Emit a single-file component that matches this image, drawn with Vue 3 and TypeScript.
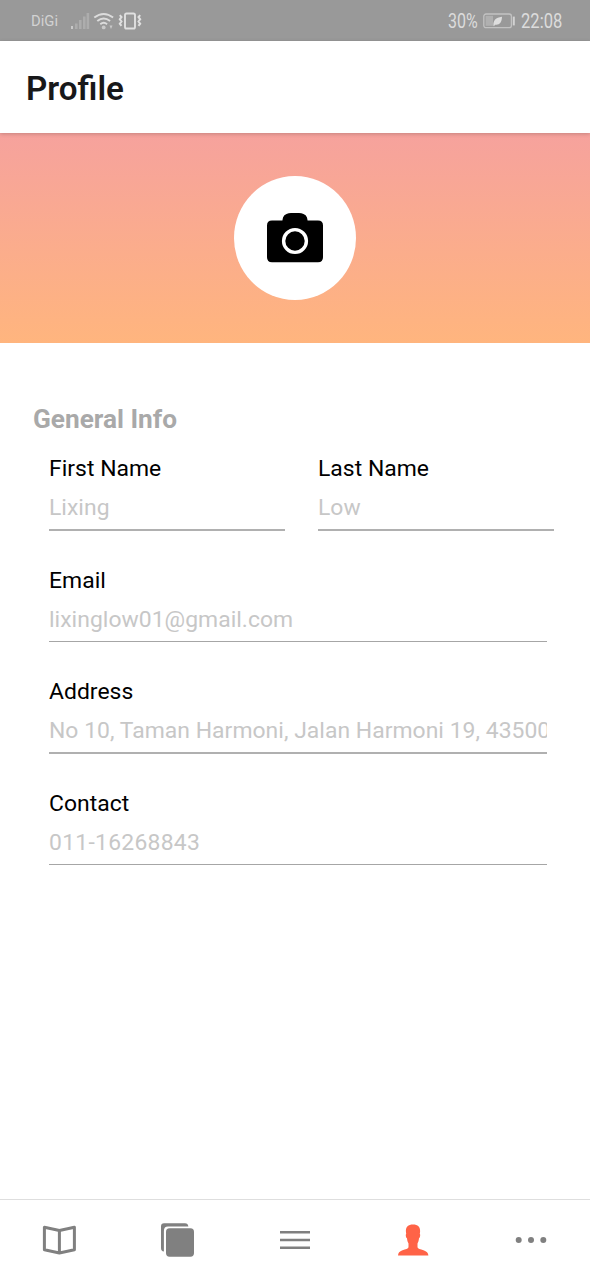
<script setup lang="ts">
interface Field {
  label: string
  value: string
  kind: string
}

const names: Field[] = [
  { label: 'First Name', value: 'Lixing', kind: 'name' },
  { label: 'Last Name', value: 'Low', kind: 'name' },
]

const details: Field[] = [
  { label: 'Email', value: 'lixinglow01@gmail.com', kind: 'email' },
  { label: 'Address', value: 'No 10, Taman Harmoni, Jalan Harmoni 19, 43500', kind: 'address' },
  { label: 'Contact', value: '011-16268843', kind: 'contact' },
]
</script>

<template>
  <div class="screen">
    <div class="status">
      <span class="carrier">DiGi</span>
      <svg class="signals" width="72" height="20" viewBox="0 0 72 20">
        <g fill="#c9c9c9">
          <rect x="1" y="15" width="2" height="3" />
          <g opacity=".42">
            <rect x="5" y="12.5" width="2.6" height="5.5" />
            <rect x="9" y="9" width="2.6" height="9" />
            <rect x="13" y="5.5" width="2.6" height="12.5" />
            <rect x="16.6" y="2" width="2.6" height="16" />
          </g>
          <circle cx="33.7" cy="16.4" r="1.9" />
          <path d="M39.5 14.5h3l-1.5 3.5z" />
        </g>
        <g fill="none" stroke="#dcdcdc" stroke-width="1.9">
          <path d="M24.3 6.6Q33.7 -.8 43.1 6.6" />
          <path d="M27.3 10Q33.7 4.8 40.1 10" />
          <path d="M30.3 13.2Q33.7 10.5 37.1 13.2" />
        </g>
        <g fill="none" stroke="#e0e0e0">
          <rect x="55" y="2.5" width="10" height="15" rx="1.6" stroke-width="1.9" />
          <path d="M49.8 4.2l1.7 1.9-1.7 2.2 1.7 2.2-1.7 2.2 1.7 2.2M70.2 4.2l-1.7 1.9 1.7 2.2-1.7 2.2 1.7 2.2-1.7 2.2" stroke-width="2" />
        </g>
      </svg>
      <span class="percent">30%</span>
      <svg class="battery" width="33" height="16" viewBox="0 0 33 16">
        <rect x=".8" y="1" width="27.6" height="13.6" rx="2.2" fill="none" stroke="#c2c2c2" stroke-width="1.3" />
        <rect x="2.6" y="2.8" width="7.4" height="10" fill="#b0b0b0" />
        <path d="M10.4 12.8C10.2 7.4 12.5 4.7 19 3.8C18.8 9.5 16.5 12.4 12 11.7L11 13.2Z" fill="#dedede" />
        <rect x="29.8" y="3.6" width="2" height="8.8" fill="#d2d2d2" />
      </svg>
      <span class="clock">22:08</span>
    </div>

    <header class="header">
      <h1>Profile</h1>
    </header>

    <div class="hero">
      <div class="avatar">
        <svg width="56" height="50" viewBox="0 0 56 50">
          <path d="M5 7.5H15.4L16 4.5Q17 1.8 19.5 1.1Q21.5 0 24 0H32Q34.5 0 36.5 1.1Q39 1.8 40 4.5L40.6 7.5H51Q56 7.5 56 12.5V44.3Q56 49.3 51 49.3H5Q0 49.3 0 44.3V12.5Q0 7.5 5 7.5Z" />
          <circle cx="28" cy="28" r="11.4" fill="none" stroke="#fff" stroke-width="3.4" />
        </svg>
      </div>
    </div>

    <main class="form">
      <h2>General Info</h2>
      <div class="names">
        <div v-for="f in names" :key="f.label" class="field">
          <div class="label">{{ f.label }}</div>
          <div class="value" :class="f.kind">{{ f.value }}</div>
        </div>
      </div>
      <div class="details">
        <div v-for="f in details" :key="f.label" class="field">
          <div class="label">{{ f.label }}</div>
          <div class="value" :class="f.kind">{{ f.value }}</div>
        </div>
      </div>
    </main>

    <nav class="tabs">
      <div class="tab">
        <svg width="36" height="36" viewBox="0 0 36 36" fill="none" stroke="#808080" stroke-width="3" stroke-linejoin="round">
          <path d="M3.4 5.3L18.4 8.5L33.4 5.3V27.8L18.4 31L3.4 27.8ZM18.4 8.5V31" />
        </svg>
      </div>
      <div class="tab">
        <svg width="36" height="36" viewBox="0 0 36 36" fill="#808080">
          <path d="M5 1.2H26Q29 1.2 29.4 4.6H9Q4.9 4.6 4.9 9V29.6Q2 29.2 2 26V4.2Q2 1.2 5 1.2Z" />
          <rect x="7" y="6.3" width="28" height="28.4" rx="3.6" />
        </svg>
      </div>
      <div class="tab">
        <svg width="36" height="36" viewBox="0 0 36 36" fill="#808080">
          <path d="M3 9.1H33V11.5H3ZM3 16.8H33V19.2H3ZM3 24.5H33V26.9H3Z" />
        </svg>
      </div>
      <div class="tab">
        <svg width="36" height="36" viewBox="0 0 36 36" fill="#ff6347">
          <path d="M18 2.4C13.2 2.4 10.6 4.8 10.9 9.4L11.2 12C10.4 12.4 10.9 15.7 12 16.2C12.2 18.8 12.9 20.3 13.5 21.6V25.3C13.2 27 10.6 27.2 7.5 28.2C4.3 29.3 3.2 30.8 3 33.4H33.4C33.2 30.8 31.7 29.3 28.5 28.2C25.4 27.2 22.8 27 22.5 25.3V21.6C23.1 20.3 23.8 18.8 24 16.2C25.1 15.7 25.6 12.4 24.8 12L25.1 9.4C25.4 4.8 22.8 2.4 18 2.4Z" />
        </svg>
      </div>
      <div class="tab">
        <svg width="36" height="36" viewBox="0 0 36 36" fill="#808080">
          <circle cx="5.7" cy="18" r="3" />
          <circle cx="18" cy="18" r="3" />
          <circle cx="30.3" cy="18" r="3" />
        </svg>
      </div>
    </nav>
  </div>
</template>

<style>
body {
  margin: 0;
  background: #fff;
}
</style>

<style scoped>
.screen {
  width: 590px;
  height: 1280px;
  display: flex;
  flex-direction: column;
  overflow: hidden;
  background: #fff;
  font-family: Roboto, "Liberation Sans", sans-serif;
}

.status {
  height: 41px;
  flex: none;
  box-sizing: border-box;
  padding-left: 31px;
  display: flex;
  align-items: center;
  background: #999;
  color: #dcdcdc;
  white-space: nowrap;
}

.carrier {
  width: 39px;
  font-size: 14.8px;
  line-height: 20px;
  color: #d2d2d2;
  padding-top: 1px;
  box-sizing: border-box;
}

.signals {
  flex: none;
}

.percent {
  width: 35px;
  margin-left: 306px;
  padding-top: 1px;
  font-size: 19.5px;
  transform: scaleX(.82);
  transform-origin: left;
}

.battery {
  flex: none;
}

.clock {
  margin-left: 5px;
  padding-top: 1px;
  font-size: 19.5px;
  transform: scaleX(.85);
  transform-origin: left;
}

.header {
  height: 92px;
  flex: none;
  display: flex;
  align-items: center;
  padding: 4px 26px 0;
  box-sizing: border-box;
  position: relative;
  background: #fff;
  box-shadow: 0 1px 4px rgba(0, 0, 0, .2);
}

h1 {
  margin: 0;
  font-size: 33.2px;
  line-height: 40px;
  font-weight: 600;
  color: #18181a;
}

.hero {
  height: 209.5px;
  flex: none;
  display: flex;
  justify-content: center;
  align-items: center;
  background: linear-gradient(#f6a29d, #ffb57e);
}

.avatar {
  width: 122px;
  height: 124.5px;
  border-radius: 50%;
  background: #fff;
  display: flex;
  justify-content: center;
  align-items: center;
}

.form {
  flex: 1;
  padding: 60.5px 36px 0 33px;
}

h2 {
  margin: 0 0 19px;
  font-size: 26.2px;
  line-height: 32px;
  font-weight: 700;
  color: #a9a9a9;
}

.names {
  display: grid;
  grid-template-columns: 236px 236px;
  gap: 33px;
  padding-left: 16px;
}

.details {
  width: 498px;
  padding-left: 16px;
}

.field {
  height: 111.7px;
}

.label {
  font-size: 22.9px;
  line-height: 30px;
  letter-spacing: .03px;
  color: #000;
}

.value {
  margin-top: 8px;
  height: 37px;
  font-size: 22.9px;
  line-height: 32px;
  letter-spacing: .04px;
  color: #c7c7c7;
  border-bottom: 1px solid #a6a6a6;
  white-space: nowrap;
  overflow: hidden;
}

.value.name,
.value.address {
  border-bottom: 2px solid #b0b0b0;
}

.value.email,
.value.contact {
  line-height: 31px;
}

.value.contact {
  letter-spacing: .27px;
}

.tabs {
  height: 81px;
  flex: none;
  box-sizing: border-box;
  display: grid;
  grid-template-columns: repeat(5, 1fr);
  border-top: 1px solid #dedede;
}

.tab {
  display: flex;
  justify-content: center;
  align-items: center;
}

.tab svg {
  display: block;
}
</style>
